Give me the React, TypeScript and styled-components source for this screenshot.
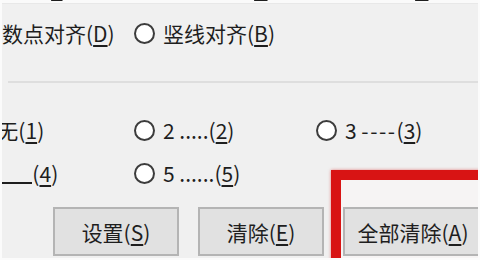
import * as React from "react";
import styled, { createGlobalStyle } from "styled-components";

const GlobalStyle = createGlobalStyle`
  body {
    margin: 0;
    background: #ffffff;
    font-family: "Noto Sans CJK SC", "Noto Sans", sans-serif;
  }
`;

const Screen = styled.div`
  position: relative;
  width: 480px;
  height: 260px;
  overflow: hidden;
  box-sizing: border-box;
  background: #f0f0f0;
  border-left: 2px solid #fbfbfb;
  border-right: 2px solid #fbfbfb;
  border-bottom: 2px solid #fbfbfb;
  color: #1e1e1e;
  font-size: 21px;
`;

const CutStrip = styled.div`
  height: 3px;
  overflow: hidden;
  background: #fafafa;
  border-bottom: 1px solid #e8e8e8;
`;

const Grid = styled.div<{ $top: number }>`
  display: grid;
  grid-template-columns: 182px 182px auto;
  margin-left: -50px;
  margin-top: ${(p) => p.$top}px;
`;

const Option = styled.label`
  display: flex;
  align-items: center;
  gap: 8px;
  height: 30px;
  white-space: nowrap;
  line-height: 30px;
`;

const Radio = styled.span`
  flex: none;
  width: 21px;
  height: 21px;
  box-sizing: border-box;
  border-radius: 50%;
  border: 2px solid #3c3c3c;
  background: #ffffff;
`;

const Key = styled.span`
  text-decoration: underline;
  text-decoration-thickness: 1.5px;
  text-underline-offset: 3px;
`;

const Dashes = styled.span`
  letter-spacing: 1.5px;
`;

const Blank = styled.span`
  display: inline-block;
  width: 35px;
  height: 18px;
  border-bottom: 2px solid #1e1e1e;
  vertical-align: -2px;
`;

const Separator = styled.div`
  height: 2px;
  margin: 33px 0 0 6px;
  background: #dedede;
`;

const ButtonRow = styled.div`
  display: flex;
  gap: 19px;
  margin: 19px 0 0 51px;
`;

const Button = styled.button<{ $width: number }>`
  position: relative;
  z-index: 1;
  flex: none;
  width: ${(p) => p.$width}px;
  height: 49px;
  box-sizing: border-box;
  border: 2px solid #b4b4b4;
  background: #e1e1e1;
  color: #1e1e1e;
  font-family: inherit;
  font-size: 21px;
  padding: 0;
`;

const Highlight = styled.div`
  position: absolute;
  left: 329px;
  top: 170px;
  right: -30px;
  bottom: -30px;
  border: 10px solid #d81414;
  background: #f6f4f4;
  box-shadow: 0 0 3px rgba(216, 20, 20, 0.5);
  z-index: 0;
`;

const Label = ({ text, k }: { text: React.ReactNode; k: string }) => (
  <span>
    {text}(<Key>{k}</Key>)
  </span>
);

export default function App() {
  return (
    <>
      <GlobalStyle />
      <Screen>
        <CutStrip>
          <Grid $top={-28}>
            <Option>
              <Radio />
              <Label text="左对齐" k="L" />
            </Option>
            <Option>
              <Radio />
              <Label text="居中对齐" k="C" />
            </Option>
            <Option>
              <Radio />
              <Label text="右对齐" k="R" />
            </Option>
          </Grid>
        </CutStrip>
        <Grid $top={14}>
          <Option>
            <Radio />
            <Label text="小数点对齐" k="D" />
          </Option>
          <Option>
            <Radio />
            <Label text="竖线对齐" k="B" />
          </Option>
        </Grid>
        <Separator />
        <Grid $top={32}>
          <Option>
            <Radio />
            <Label text="1 无" k="1" />
          </Option>
          <Option>
            <Radio />
            <Label text="2 ....." k="2" />
          </Option>
          <Option>
            <Radio />
            <Label
              text={
                <>
                  3 <Dashes>----</Dashes>
                </>
              }
              k="3"
            />
          </Option>
        </Grid>
        <Grid $top={13}>
          <Option>
            <Radio />
            <span>
              4 <Blank />(<Key>4</Key>)
            </span>
          </Option>
          <Option>
            <Radio />
            <Label text="5 ......" k="5" />
          </Option>
        </Grid>
        <ButtonRow>
          <Button $width={126}>
            设置(<Key>S</Key>)
          </Button>
          <Button $width={126}>
            清除(<Key>E</Key>)
          </Button>
          <Button $width={140}>
            全部清除(<Key>A</Key>)
          </Button>
        </ButtonRow>
        <Highlight />
      </Screen>
    </>
  );
}
